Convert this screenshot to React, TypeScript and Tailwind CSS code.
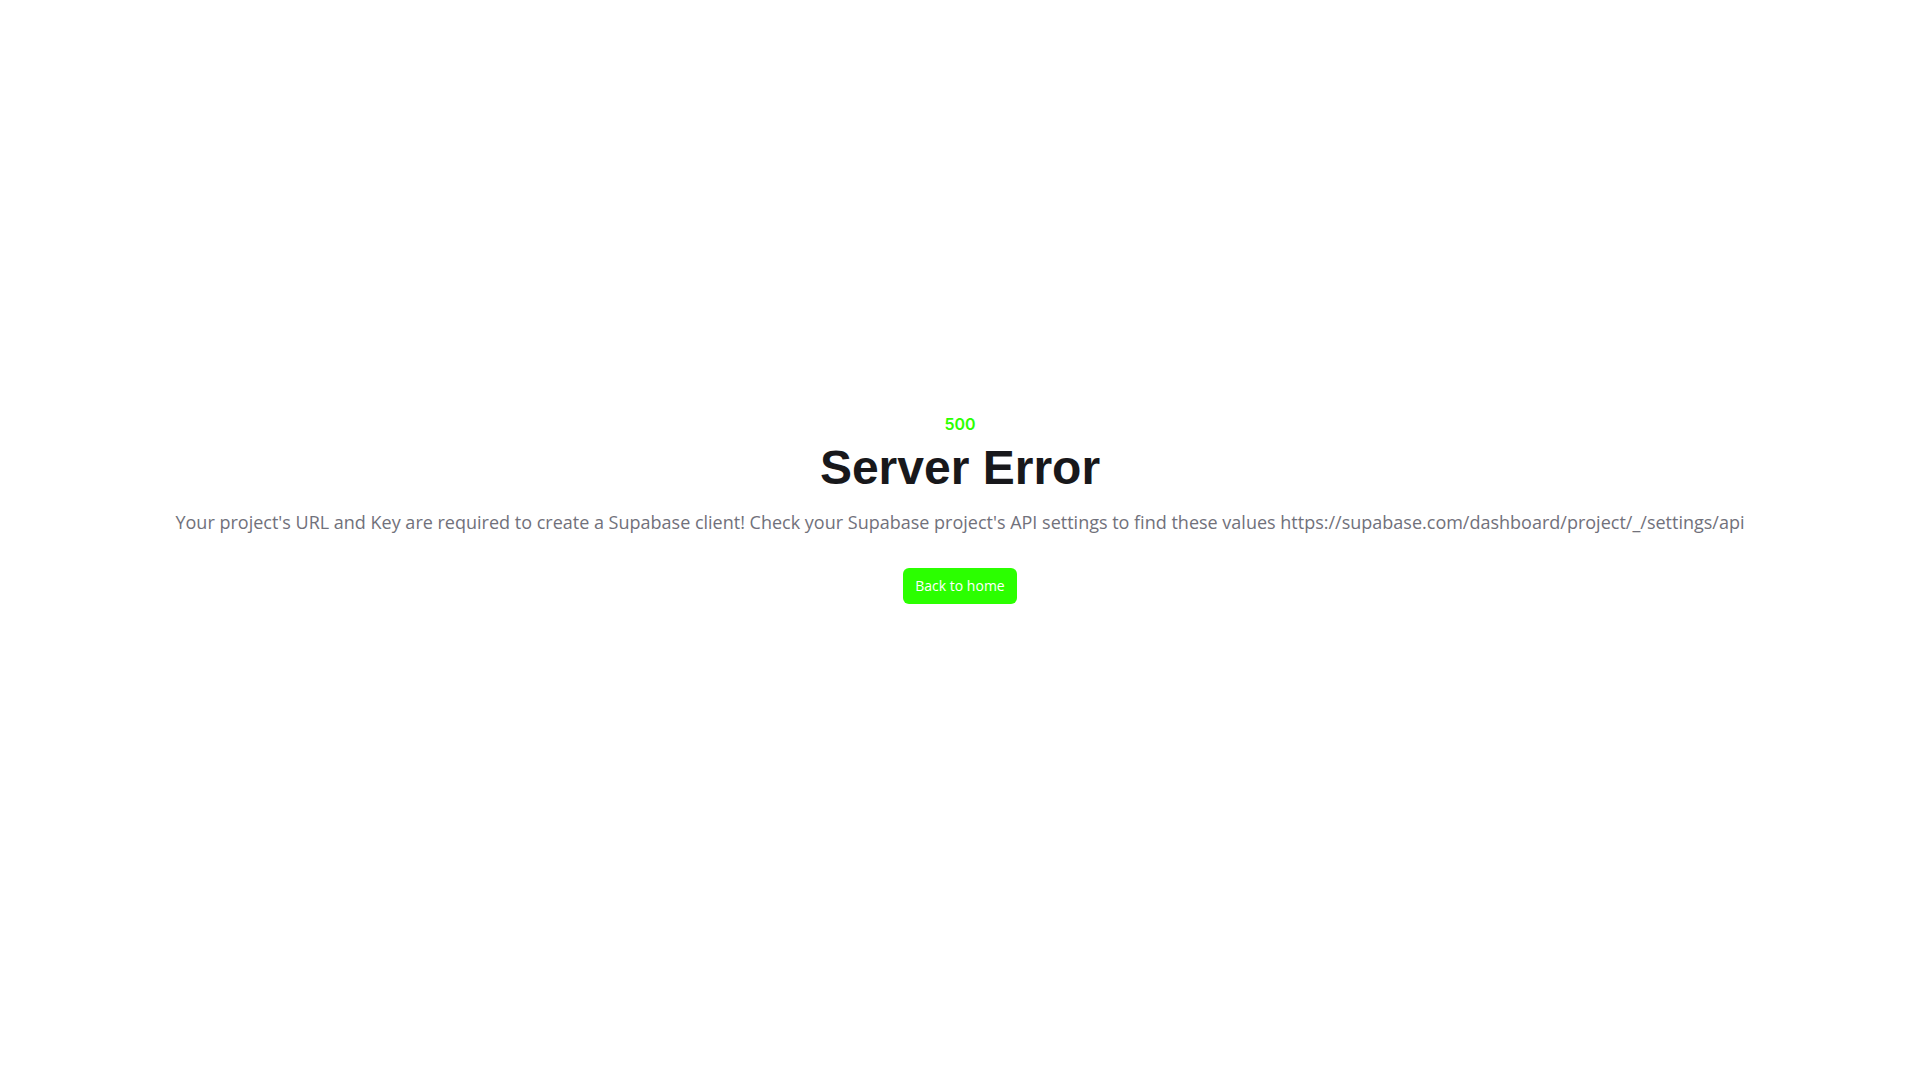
const error = {
  statusCode: 500,
  statusMessage: "Server Error",
  message:
    "Your project's URL and Key are required to create a Supabase client! Check your Supabase project's API settings to find these values https://supabase.com/dashboard/project/_/settings/api",
};

const App = () => {
  return (
    <div className="min-h-screen bg-white font-['Inter',sans-serif] antialiased">
      <main className="min-h-[calc(100vh-64px)] flex flex-col items-center justify-center text-center">
        <p className="text-base font-semibold text-[#2bff00]">
          {error.statusCode}
        </p>
        <h1 className="mt-2 text-5xl/12 font-bold text-zinc-900 font-['Liberation_Sans',sans-serif]">
          {error.statusMessage}
        </h1>
        <p className="mt-4 text-lg/7 text-zinc-500 font-['Open_Sans',sans-serif]">
          {error.message}
        </p>
        <div className="mt-8 flex items-center justify-center gap-6">
          <button
            type="button"
            className="inline-flex items-center rounded-md bg-[#2bff00] px-3 py-2 text-sm font-medium text-white cursor-pointer font-['Open_Sans',sans-serif]"
          >
            Back to home
          </button>
        </div>
      </main>
    </div>
  );
};

export default App;
